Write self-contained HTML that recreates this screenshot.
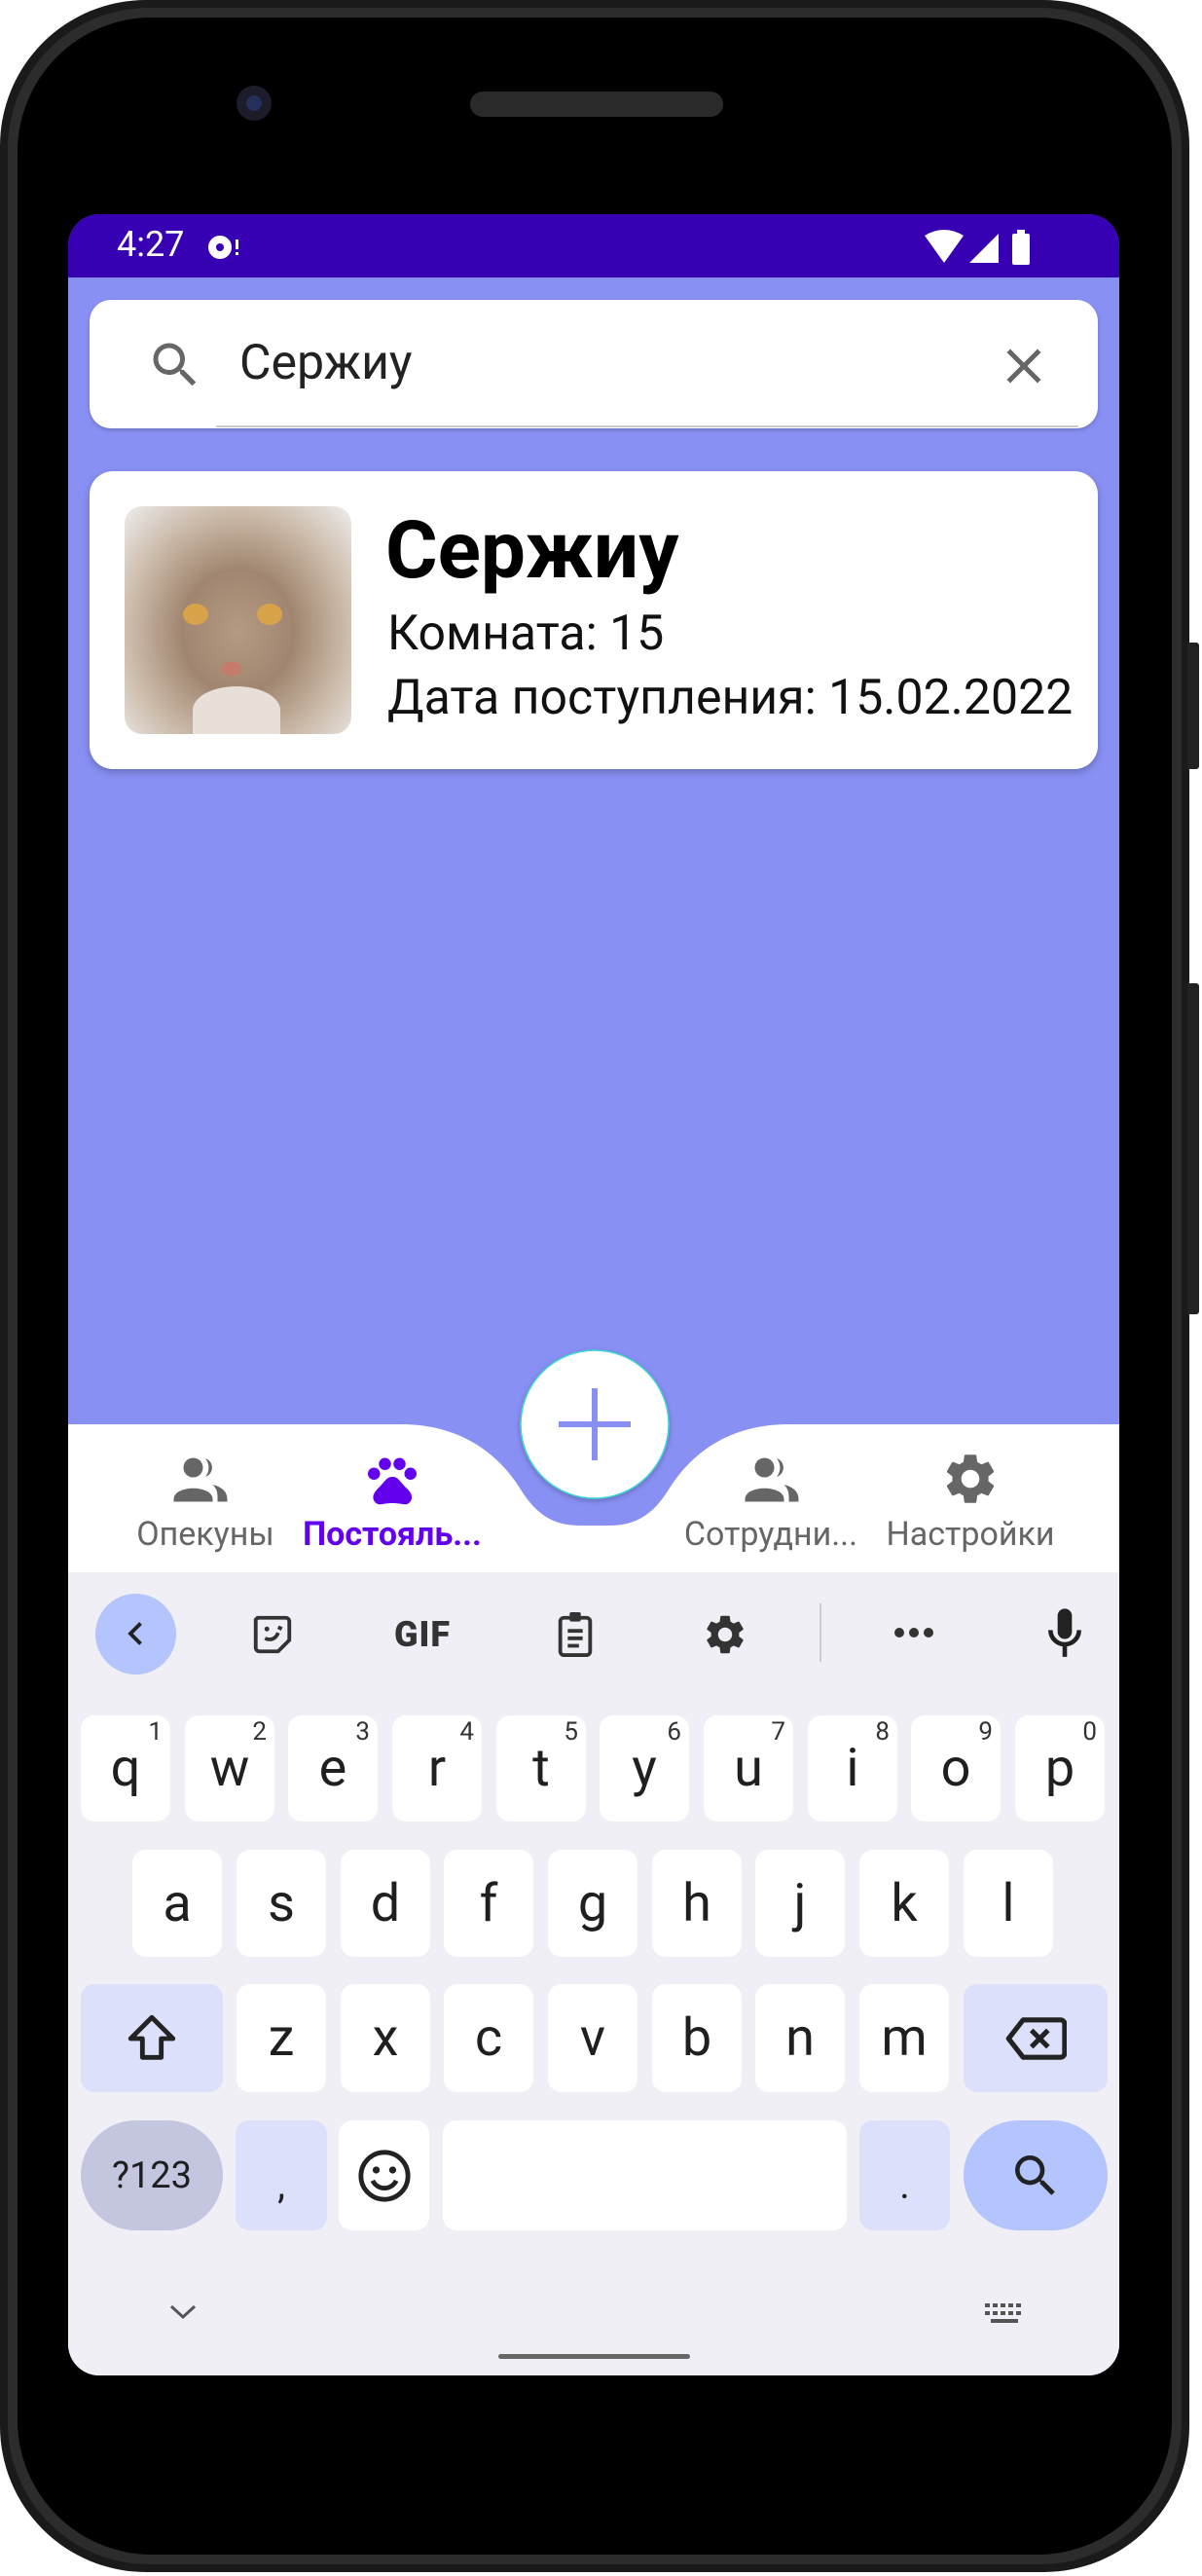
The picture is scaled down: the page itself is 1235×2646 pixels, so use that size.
<!DOCTYPE html>
<html><head><meta charset="utf-8"><style>
*{margin:0;padding:0;box-sizing:border-box}
body{width:1235px;height:2646px;background:#fff;position:relative;overflow:hidden;font-family:"Roboto","Liberation Sans","DejaVu Sans",sans-serif}
.abs{position:absolute}
.key{position:absolute;background:#fff;border-radius:14px;color:#1f1f1f;font-size:54px;text-align:center;display:flex;align-items:center;justify-content:center}
.key sup{position:absolute;right:8px;top:2px;font-size:26px;color:#333}
.nl{position:absolute;font-size:34px;color:#666;text-align:center;width:220px;white-space:nowrap}
</style></head><body>
<div class="abs" style="left:0;top:0;width:1222px;height:2642px;border-radius:150px;background:#1a1a1a"></div>
<div class="abs" style="left:8px;top:8px;width:1206px;height:2626px;border-radius:145px;background:#2c2c2c"></div>
<div class="abs" style="left:18px;top:18px;width:1186px;height:2606px;border-radius:138px;background:#000"></div>
<div class="abs" style="left:1220px;top:660px;width:12px;height:130px;background:#222;border-radius:3px"></div>
<div class="abs" style="left:1220px;top:1010px;width:12px;height:340px;background:#222;border-radius:3px"></div>
<div class="abs" style="left:243px;top:88px;width:36px;height:36px;border-radius:50%;background:#1c1c2a"></div>
<div class="abs" style="left:253px;top:98px;width:16px;height:16px;border-radius:50%;background:#25305a"></div>
<div class="abs" style="left:483px;top:94px;width:260px;height:26px;border-radius:13px;background:#2a2a2a"></div>

<div class="abs" style="left:70px;top:220px;width:1080px;height:2220px;border-radius:32px;overflow:hidden;background:#8890f4">
  <div class="abs" style="left:0;top:0;width:1080px;height:65px;background:#3700b3"></div>
  <div class="abs" style="left:50px;top:10px;color:#fff;font-size:36px">4:27</div>
  <svg class="abs" style="left:142px;top:18px" width="40" height="32" viewBox="0 0 40 32"><circle cx="14" cy="16" r="12" fill="#fff"/><circle cx="14" cy="16" r="4" fill="#3700b3"/><rect x="30" y="8" width="3" height="10" fill="#fff"/><rect x="30" y="21" width="3" height="3" fill="#fff"/></svg>
  <svg class="abs" style="left:880px;top:14px" width="140" height="40" viewBox="0 0 140 40"><path d="M0 8 Q20 -4 40 8 L20 36Z" fill="#fff"/><path d="M46 36 L76 6 V36Z" fill="#fff"/><rect x="90" y="6" width="18" height="32" rx="2" fill="#fff"/><rect x="95" y="2" width="8" height="5" fill="#fff"/></svg>

  <div class="abs" style="left:22px;top:88px;width:1036px;height:132px;background:#fff;border-radius:22px;box-shadow:0 2px 4px rgba(0,0,0,.2)"></div>
  <div class="abs" style="left:152px;top:217px;width:886px;height:2px;background:#ccc"></div>
  <svg class="abs" style="left:80px;top:125px" width="60" height="60" viewBox="0 0 24 24"><path fill="#666" d="M15.5 14h-.79l-.28-.27A6.470 6.47 0 0 0 16 9.5 6.5 6.5 0 1 0 9.5 16c1.61 0 3.09-.59 4.23-1.57l.27.28v.79l5 4.99L20.49 19l-4.99-5zm-6 0C7.01 14 5 11.99 5 9.5S7.01 5 9.5 5 14 7.01 14 9.5 11.99 14 9.5 14z"/></svg>
  <div class="abs" style="left:176px;top:124px;font-size:50px;color:#222">Сержиу</div>
  <svg class="abs" style="left:952px;top:126px" width="60" height="60" viewBox="0 0 24 24"><path fill="#666" d="M19 6.41 17.59 5 12 10.59 6.41 5 5 6.41 10.59 12 5 17.59 6.41 19 12 13.41 17.59 19 19 17.59 13.41 12z"/></svg>

  <div class="abs" style="left:22px;top:264px;width:1036px;height:306px;background:#fff;border-radius:24px;box-shadow:0 3px 8px rgba(0,0,0,.25)"></div>
  <div class="abs" style="left:58px;top:300px;width:233px;height:234px;border-radius:18px;overflow:hidden;background:radial-gradient(ellipse at 50% 55%,#b59a82 0%,#a08670 35%,#c9b7a5 65%,#eee 100%)">
    <div class="abs" style="left:60px;top:100px;width:26px;height:22px;border-radius:50%;background:#d7a24a"></div>
    <div class="abs" style="left:136px;top:100px;width:26px;height:22px;border-radius:50%;background:#d7a24a"></div>
    <div class="abs" style="left:100px;top:160px;width:20px;height:14px;border-radius:40%;background:#c57b6c"></div>
    <div class="abs" style="left:70px;top:185px;width:90px;height:49px;border-radius:50% 50% 0 0;background:#e8e0d8"></div>
  </div>
  <div class="abs" style="left:326px;top:298px;font-size:82px;font-weight:bold;color:#000;line-height:96px">Сержиу</div>
  <div class="abs" style="left:328px;top:403px;font-size:50px;color:#111;line-height:56px">Комната: 15</div>
  <div class="abs" style="left:328px;top:469px;font-size:50px;color:#111;line-height:56px;white-space:nowrap">Дата поступления: 15.02.2022</div>

  <svg class="abs" style="left:0;top:1100px" width="1080" height="300" viewBox="0 0 1080 300">
    <defs><filter id="sh"><feDropShadow dx="0" dy="2" stdDeviation="3" flood-opacity=".25"/></filter></defs>
    <path d="M0 143 H342 C400 143 440 170 465 210 C490 250 515 247 541 247 C567 247 592 250 617 210 C642 170 682 143 740 143 H1080 V300 H0Z" fill="#fff"/>
    <circle cx="541" cy="143" r="76" fill="#fff" stroke="#3dd6d0" stroke-width="1.5" filter="url(#sh)"/>
    <rect x="504" y="140" width="74" height="6" fill="#8890f4"/>
    <rect x="538" y="106" width="6" height="74" fill="#8890f4"/>
  </svg>
  <svg class="abs" style="left:105px;top:1275px" width="62" height="50" viewBox="0 0 24 20"><circle cx="9" cy="5" r="4" fill="#666"/><path d="M1 18 C1 12 17 12 17 18 V19 H1Z" fill="#666"/><path d="M14 1.2 A4 4 0 0 1 14 8.8 A6 6 0 0 0 14 1.2Z" fill="#666"/><path d="M17 12 C21 13 23 15 23 18 V19 H19 V17 C19 15 18.5 13.5 17 12Z" fill="#666"/></svg>
  <svg class="abs" style="left:302px;top:1270px" width="62" height="60" viewBox="0 0 24 24"><circle cx="4.5" cy="9.5" r="2.5" fill="#6200ee"/><circle cx="9" cy="5.5" r="2.5" fill="#6200ee"/><circle cx="15" cy="5.5" r="2.5" fill="#6200ee"/><circle cx="19.5" cy="9.5" r="2.5" fill="#6200ee"/><path d="M17.3 14.9c-.9-1-1.6-1.8-2.5-2.8-.4-.5-1-1-1.7-1.2-.1 0-.2-.1-.3-.1-.3 0-.5 0-.8 0s-.5 0-.8.1c-.1 0-.2.1-.3.1-.7.2-1.3.7-1.7 1.2-.8.9-1.6 1.8-2.5 2.8-1.3 1.3-2.8 2.8-2.5 4.8.3 1 1 2 2.3 2.3.7.1 3-.5 5.5-.5h.2c2.5 0 4.8.6 5.5.5 1.3-.3 2-1.3 2.3-2.3.3-2.1-1.2-3.5-2.7-4.9z" fill="#6200ee"/></svg>
  <svg class="abs" style="left:692px;top:1275px" width="62" height="50" viewBox="0 0 24 20"><circle cx="9" cy="5" r="4" fill="#666"/><path d="M1 18 C1 12 17 12 17 18 V19 H1Z" fill="#666"/><path d="M14 1.2 A4 4 0 0 1 14 8.8 A6 6 0 0 0 14 1.2Z" fill="#666"/><path d="M17 12 C21 13 23 15 23 18 V19 H19 V17 C19 15 18.5 13.5 17 12Z" fill="#666"/></svg>
  <svg class="abs" style="left:896px;top:1268px" width="62" height="62" viewBox="0 0 24 24"><path fill="#666" d="M19.14 12.94c.04-.3.06-.61.06-.94 0-.32-.02-.64-.07-.94l2.03-1.58a.49.49 0 0 0 .12-.61l-1.92-3.32a.488.488 0 0 0-.59-.22l-2.39.96c-.5-.38-1.03-.7-1.62-.94l-.36-2.54a.484.484 0 0 0-.48-.41h-3.84c-.24 0-.43.17-.47.41l-.36 2.54c-.59.24-1.13.57-1.62.94l-2.39-.96c-.22-.08-.47 0-.59.22L2.74 8.87c-.12.21-.08.47.12.61l2.03 1.58c-.05.3-.09.63-.09.94s.02.64.07.94l-2.03 1.58a.49.49 0 0 0-.12.61l1.92 3.32c.12.22.37.29.59.22l2.39-.96c.5.38 1.03.7 1.62.94l.36 2.54c.05.24.24.41.48.41h3.84c.24 0 .44-.17.47-.41l.36-2.54c.59-.24 1.13-.56 1.62-.94l2.39.96c.22.08.47 0 .59-.22l1.92-3.32c.12-.22.07-.47-.12-.61l-2.01-1.58zM12 15.6c-1.98 0-3.6-1.62-3.6-3.6s1.62-3.6 3.6-3.6 3.6 1.62 3.6 3.6-1.62 3.6-3.6 3.6z"/></svg>
  <div class="nl" style="left:31px;top:1336px">Опекуны</div>
  <div class="nl" style="left:223px;top:1336px;color:#6200ee;font-weight:bold">Постояль...</div>
  <div class="nl" style="left:612px;top:1336px">Сотрудни...</div>
  <div class="nl" style="left:817px;top:1336px">Настройки</div>

  <div class="abs" style="left:0;top:1395px;width:1080px;height:825px;background:#f1eff6"></div>
  <div class="abs" style="left:28px;top:1417px;width:83px;height:83px;border-radius:50%;background:#b4c4fc"></div>
  <svg class="abs" style="left:52px;top:1440px" width="36" height="36" viewBox="0 0 24 24"><path d="M15 5 8 12l7 7" stroke="#222" stroke-width="2.6" fill="none"/></svg>
  <svg class="abs" style="left:187px;top:1436px" width="46" height="46" viewBox="0 0 24 24"><path d="M4 3h15a2 2 0 0 1 2 2v10l-6 6H5a2 2 0 0 1-2-2V4z" stroke="#333" stroke-width="2" fill="none"/><circle cx="9" cy="9" r="1.3" fill="#333"/><path d="M8 14c3 1.5 6 0 7-3M15 8l2 1" stroke="#333" stroke-width="2" fill="none"/></svg>
  <div class="abs" style="left:335px;top:1438px;font-size:36px;font-weight:900;color:#333;letter-spacing:1px">GIF</div>
  <svg class="abs" style="left:498px;top:1434px" width="46" height="50" viewBox="0 0 24 26"><rect x="4" y="4" width="16" height="20" rx="2" stroke="#333" stroke-width="2" fill="none"/><rect x="9" y="1" width="6" height="5" rx="1" fill="#333"/><path d="M8 11h8M8 15h8M8 19h6" stroke="#333" stroke-width="2"/></svg>
  <svg class="abs" style="left:651px;top:1435px" width="48" height="48" viewBox="0 0 24 24"><path fill="#333" d="M19.14 12.94c.04-.3.06-.61.06-.94 0-.32-.02-.64-.07-.94l2.03-1.58a.49.49 0 0 0 .12-.61l-1.92-3.32a.488.488 0 0 0-.59-.22l-2.39.96c-.5-.38-1.03-.7-1.62-.94l-.36-2.54a.484.484 0 0 0-.48-.41h-3.84c-.24 0-.43.17-.47.41l-.36 2.54c-.59.24-1.13.57-1.62.94l-2.39-.96c-.22-.08-.47 0-.59.22L2.74 8.87c-.12.21-.08.47.12.61l2.03 1.58c-.05.3-.09.63-.09.94s.02.64.07.94l-2.03 1.58a.49.49 0 0 0-.12.61l1.92 3.32c.12.22.37.29.59.22l2.39-.96c.5.38 1.03.7 1.62.94l.36 2.54c.05.24.24.41.48.41h3.84c.24 0 .44-.17.47-.41l.36-2.54c.59-.24 1.13-.56 1.62-.94l2.39.96c.22.08.47 0 .59-.22l1.92-3.32c.12-.22.07-.47-.12-.61l-2.01-1.58zM12 15.6c-1.98 0-3.6-1.62-3.6-3.6s1.62-3.6 3.6-3.6 3.6 1.62 3.6 3.6-1.62 3.6-3.6 3.6z"/></svg>
  <div class="abs" style="left:772px;top:1427px;width:2px;height:60px;background:#ccc"></div>
  <svg class="abs" style="left:847px;top:1450px" width="44" height="14" viewBox="0 0 44 14"><circle cx="7" cy="7" r="5" fill="#333"/><circle cx="22" cy="7" r="5" fill="#333"/><circle cx="37" cy="7" r="5" fill="#333"/></svg>
  <svg class="abs" style="left:1002px;top:1430px" width="44" height="56" viewBox="0 0 24 30"><rect x="8" y="1" width="8" height="17" rx="4" fill="#222"/><path d="M4 13a8 8 0 0 0 16 0M12 21v7" stroke="#222" stroke-width="2.5" fill="none"/></svg>

  <div class="key" style="left:13px;top:1542px;width:92px;height:109px">q<sup>1</sup></div>
  <div class="key" style="left:120px;top:1542px;width:92px;height:109px">w<sup>2</sup></div>
  <div class="key" style="left:226px;top:1542px;width:92px;height:109px">e<sup>3</sup></div>
  <div class="key" style="left:333px;top:1542px;width:92px;height:109px">r<sup>4</sup></div>
  <div class="key" style="left:440px;top:1542px;width:92px;height:109px">t<sup>5</sup></div>
  <div class="key" style="left:546px;top:1542px;width:92px;height:109px">y<sup>6</sup></div>
  <div class="key" style="left:653px;top:1542px;width:92px;height:109px">u<sup>7</sup></div>
  <div class="key" style="left:760px;top:1542px;width:92px;height:109px">i<sup>8</sup></div>
  <div class="key" style="left:866px;top:1542px;width:92px;height:109px">o<sup>9</sup></div>
  <div class="key" style="left:973px;top:1542px;width:92px;height:109px">p<sup>0</sup></div>
  <div class="key" style="left:66px;top:1680px;width:92px;height:110px">a</div>
  <div class="key" style="left:173px;top:1680px;width:92px;height:110px">s</div>
  <div class="key" style="left:280px;top:1680px;width:92px;height:110px">d</div>
  <div class="key" style="left:386px;top:1680px;width:92px;height:110px">f</div>
  <div class="key" style="left:493px;top:1680px;width:92px;height:110px">g</div>
  <div class="key" style="left:600px;top:1680px;width:92px;height:110px">h</div>
  <div class="key" style="left:706px;top:1680px;width:92px;height:110px">j</div>
  <div class="key" style="left:813px;top:1680px;width:92px;height:110px">k</div>
  <div class="key" style="left:920px;top:1680px;width:92px;height:110px">l</div>
  <div class="key" style="left:13px;top:1818px;width:146px;height:111px;background:#dde0fa"><svg width="58" height="58" viewBox="0 0 24 24"><path d="M12 3 3 12h5v8h8v-8h5z" stroke="#222" stroke-width="2" fill="none" stroke-linejoin="round"/></svg></div>
  <div class="key" style="left:173px;top:1818px;width:92px;height:111px">z</div>
  <div class="key" style="left:280px;top:1818px;width:92px;height:111px">x</div>
  <div class="key" style="left:386px;top:1818px;width:92px;height:111px">c</div>
  <div class="key" style="left:493px;top:1818px;width:92px;height:111px">v</div>
  <div class="key" style="left:600px;top:1818px;width:92px;height:111px">b</div>
  <div class="key" style="left:706px;top:1818px;width:92px;height:111px">n</div>
  <div class="key" style="left:813px;top:1818px;width:92px;height:111px">m</div>
  <div class="key" style="left:920px;top:1818px;width:148px;height:111px;background:#dde0fa"><svg width="64" height="48" viewBox="0 0 30 22"><path d="M9 2h18a2 2 0 0 1 2 2v14a2 2 0 0 1-2 2H9L2 11z" stroke="#222" stroke-width="2.4" fill="none" stroke-linejoin="round"/><path d="M13 7l8 8M21 7l-8 8" stroke="#222" stroke-width="2.4"/></svg></div>
  <div class="key" style="left:13px;top:1958px;width:146px;height:113px;background:#c4c6e0;border-radius:57px;font-size:38px">?123</div>
  <div class="key" style="left:172px;top:1958px;width:94px;height:113px;background:#dde0fa;font-size:40px;padding-top:20px">,</div>
  <div class="key" style="left:278px;top:1958px;width:93px;height:113px"><svg width="58" height="58" viewBox="0 0 24 24"><circle cx="12" cy="12" r="10" stroke="#222" stroke-width="2" fill="none"/><circle cx="8.5" cy="9.5" r="1.5" fill="#222"/><circle cx="15.5" cy="9.5" r="1.5" fill="#222"/><path d="M7 14a5.5 5.5 0 0 0 10 0" stroke="#222" stroke-width="2" fill="none"/></svg></div>
  <div class="key" style="left:385px;top:1958px;width:415px;height:113px"></div>
  <div class="key" style="left:813px;top:1958px;width:93px;height:113px;background:#dde0fa;font-size:40px;padding-top:20px">.</div>
  <div class="key" style="left:920px;top:1958px;width:148px;height:113px;background:#b4c4fc;border-radius:57px"><svg width="56" height="56" viewBox="0 0 24 24"><path fill="#222" d="M15.5 14h-.79l-.28-.27A6.47 6.47 0 0 0 16 9.5 6.5 6.5 0 1 0 9.5 16c1.61 0 3.09-.59 4.23-1.57l.27.28v.79l5 4.99L20.49 19l-4.99-5zm-6 0C7.01 14 5 11.99 5 9.5S7.01 5 9.5 5 14 7.01 14 9.5 11.99 14 9.5 14z"/></svg></div>

  <svg class="abs" style="left:102px;top:2144px" width="32" height="20" viewBox="0 0 32 20"><path d="M4 5l12 11L28 5" stroke="#555" stroke-width="3" fill="none"/></svg>
  <svg class="abs" style="left:940px;top:2144px" width="46" height="30" viewBox="0 0 46 30"><g fill="#555"><rect x="2" y="2" width="5" height="4"/><rect x="10" y="2" width="5" height="4"/><rect x="18" y="2" width="5" height="4"/><rect x="26" y="2" width="5" height="4"/><rect x="34" y="2" width="5" height="4"/><rect x="2" y="10" width="5" height="4"/><rect x="10" y="10" width="5" height="4"/><rect x="18" y="10" width="5" height="4"/><rect x="26" y="10" width="5" height="4"/><rect x="34" y="10" width="5" height="4"/><rect x="8" y="18" width="28" height="4"/></g></svg>
  <div class="abs" style="left:442px;top:2198px;width:197px;height:5px;border-radius:3px;background:#666"></div>
</div>
</body></html>
